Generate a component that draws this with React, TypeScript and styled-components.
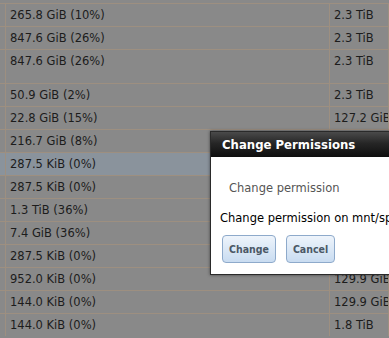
import styled, { createGlobalStyle } from "styled-components";

const GlobalStyle = createGlobalStyle`
  html, body {
    margin: 0;
    padding: 0;
    background: #898989;
    overflow: hidden;
  }
  body {
    font-family: "DejaVu Sans", Verdana, sans-serif;
    font-size: 11.5px;
    color: #1c1c1c;
  }
`;

const rows = [
  { used: "265.8 GiB (10%)", size: "2.3 TiB" },
  { used: "847.6 GiB (26%)", size: "2.3 TiB" },
  { used: "847.6 GiB (26%)", size: "2.3 TiB", tall: true },
  { used: "50.9 GiB (2%)", size: "2.3 TiB" },
  { used: "22.8 GiB (15%)", size: "127.2 GiB" },
  { used: "216.7 GiB (8%)", size: "127.2 GiB" },
  { used: "287.5 KiB (0%)", size: "127.2 GiB", selected: true },
  { used: "287.5 KiB (0%)", size: "127.2 GiB" },
  { used: "1.3 TiB (36%)", size: "1.8 TiB" },
  { used: "7.4 GiB (36%)", size: "20.2 GiB" },
  { used: "287.5 KiB (0%)", size: "129.9 GiB" },
  { used: "952.0 KiB (0%)", size: "129.9 GiB" },
  { used: "144.0 KiB (0%)", size: "129.9 GiB" },
  { used: "144.0 KiB (0%)", size: "1.8 TiB" },
];

export default function App() {
  return (
    <>
      <GlobalStyle />
      <Page>
        <Grid>
          {rows.map((row, index) => (
            <Row key={index} $tall={row.tall} $selected={row.selected}>
              <Cell />
              <Cell>{row.used}</Cell>
              <Cell>{row.size}</Cell>
            </Row>
          ))}
        </Grid>
        <Dialog>
          <TitleBar>Change Permissions</TitleBar>
          <Body>
            <Heading>Change permission</Heading>
            <Message>Change permission on mnt/spool/share</Message>
            <Actions>
              <Button>Change</Button>
              <Button>Cancel</Button>
            </Actions>
          </Body>
        </Dialog>
      </Page>
    </>
  );
}

const Page = styled.div`
  position: relative;
  width: 389px;
  height: 338px;
  overflow: hidden;
`;

const Grid = styled.div`
  display: flex;
  flex-direction: column;
  padding-top: 3px;
`;

const Row = styled.div<{ $tall?: boolean; $selected?: boolean }>`
  display: grid;
  grid-template-columns: 6px 324px 1fr;
  height: ${(p) => (p.$tall ? "33px" : "22px")};
  border-top: 1px solid #9d8f80;
  background: ${(p) => (p.$selected ? "#8a939c" : "transparent")};
`;

const Cell = styled.div`
  padding: 4px 0 0 4px;
  line-height: 14px;
  white-space: nowrap;
  overflow: hidden;
  border-right: 1px solid #9d8f80;
`;

const Dialog = styled.div`
  position: absolute;
  left: 210px;
  top: 131px;
  width: 260px;
  background: #fff;
  border: 1px solid #2a2a2a;
  box-shadow: 0 0 3px rgba(0, 0, 0, 0.5);
`;

const TitleBar = styled.div`
  height: 25px;
  line-height: 25px;
  padding-left: 11px;
  background: linear-gradient(#4a4a4a, #262626 45%, #0e0e0e);
  color: #fff;
  font-family: "DejaVu Sans Condensed", "DejaVu Sans", sans-serif;
  font-weight: bold;
  font-size: 13px;
`;

const Body = styled.div`
  padding: 24px 0 11px 9px;
`;

const Heading = styled.div`
  padding-left: 9px;
  color: #555;
  font-size: 11.5px;
  line-height: 14px;
`;

const Message = styled.div`
  margin-top: 16px;
  color: #000;
  font-size: 11.5px;
  line-height: 14px;
  white-space: nowrap;
`;

const Actions = styled.div`
  display: flex;
  gap: 10px;
  margin-top: 10px;
  padding-left: 2px;
`;

const Button = styled.button`
  height: 28px;
  padding: 0 6px;
  border: 1px solid #8eaacb;
  border-radius: 4px;
  background: linear-gradient(#eef4fb, #c9dcf1);
  color: #4b5866;
  font-family: "DejaVu Sans Condensed", "DejaVu Sans", sans-serif;
  font-weight: bold;
  font-size: 10.5px;
`;
